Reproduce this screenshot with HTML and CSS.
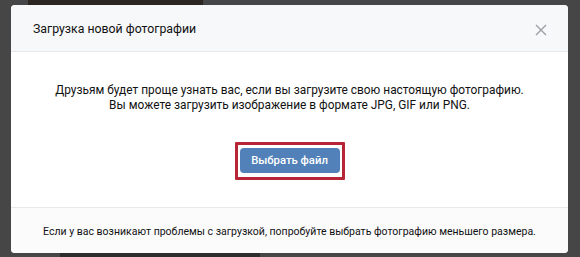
FILE: index.html
```html
<!DOCTYPE html>
<html lang="ru">
<head>
<meta charset="utf-8">
<title>Загрузка новой фотографии</title>
<link rel="stylesheet" href="styles.css">
</head>
<body>
<div class="backdrop">
  <div class="bg-photo"></div>
  <div class="bg-photo2"></div>
  <div class="modal">
    <div class="modal-header">
      <span class="modal-title">Загрузка новой фотографии</span>
      <svg class="close" width="12" height="12" viewBox="0 0 12 12"><path d="M1 1 L11 11 M11 1 L1 11" stroke="#9a9ea5" stroke-width="1.4" fill="none"/></svg>
    </div>
    <div class="modal-body">
      <p class="info">Друзьям будет проще узнать вас, если вы загрузите свою настоящую фотографию.<br>Вы можете загрузить изображение в формате JPG, GIF или PNG.</p>
      <div class="highlight">
        <button class="btn">Выбрать файл</button>
      </div>
    </div>
    <div class="modal-footer">Если у вас возникают проблемы с загрузкой, попробуйте выбрать фотографию меньшего размера.</div>
  </div>
</div>
</body>
</html>
```

FILE: styles.css
```css
html, body {
  margin: 0;
  padding: 0;
}
body {
  font-family: Roboto, "Open Sans", "Liberation Sans", sans-serif;
  background: #3f3f3f;
}
.backdrop {
  position: relative;
  width: 580px;
  height: 257px;
  overflow: hidden;
  background: #464646;
  padding-top: 5px;
  box-sizing: border-box;
}
.bg-photo {
  position: absolute;
  left: 28px;
  top: 0;
  width: 175px;
  height: 8px;
  background: #2b2622;
}
.bg-photo2 {
  position: absolute;
  left: 60px;
  top: 250px;
  width: 200px;
  height: 7px;
  background: #2d2d2d;
}
.modal {
  position: relative;
  margin-left: 11px;
  width: 557px;
  height: 248px;
  background: #fff;
  border-radius: 4px;
  overflow: hidden;
  display: flex;
  flex-direction: column;
}
.modal-header {
  height: 44px;
  padding: 2px 21px 0 22px;
  background: #f7f8fa;
  border-bottom: 1px solid #e7e8ec;
  display: flex;
  align-items: center;
  justify-content: space-between;
  flex-shrink: 0;
}
.modal-title {
  font-size: 12.3px;
  color: #111;
}
.close {
  display: block;
  margin-top: 1px;
}
.modal-body {
  height: 155px;
  display: flex;
  flex-direction: column;
  align-items: center;
  flex-shrink: 0;
}
.info {
  margin: 31px 0 0;
  font-size: 11.9px;
  line-height: 15px;
  text-align: center;
  color: #111;
}
.highlight {
  margin-top: 29px;
  border: 3px solid #b72637;
  padding: 3px 2px 4px;
  border-radius: 1px;
}
.btn {
  display: block;
  width: 100px;
  height: 25px;
  border: none;
  border-radius: 4px;
  background: #5181b8;
  color: #fff;
  font-family: Roboto, "Open Sans", "Liberation Sans", sans-serif;
  font-size: 11.3px;
  font-weight: 500;
  padding: 0;
}
.modal-footer {
  flex: 1;
  border-top: 1px solid #e7e8ec;
  background: #fbfbfc;
  display: flex;
  align-items: center;
  justify-content: center;
  font-size: 10.5px;
  color: #111;
  padding-top: 1px;
}
```
